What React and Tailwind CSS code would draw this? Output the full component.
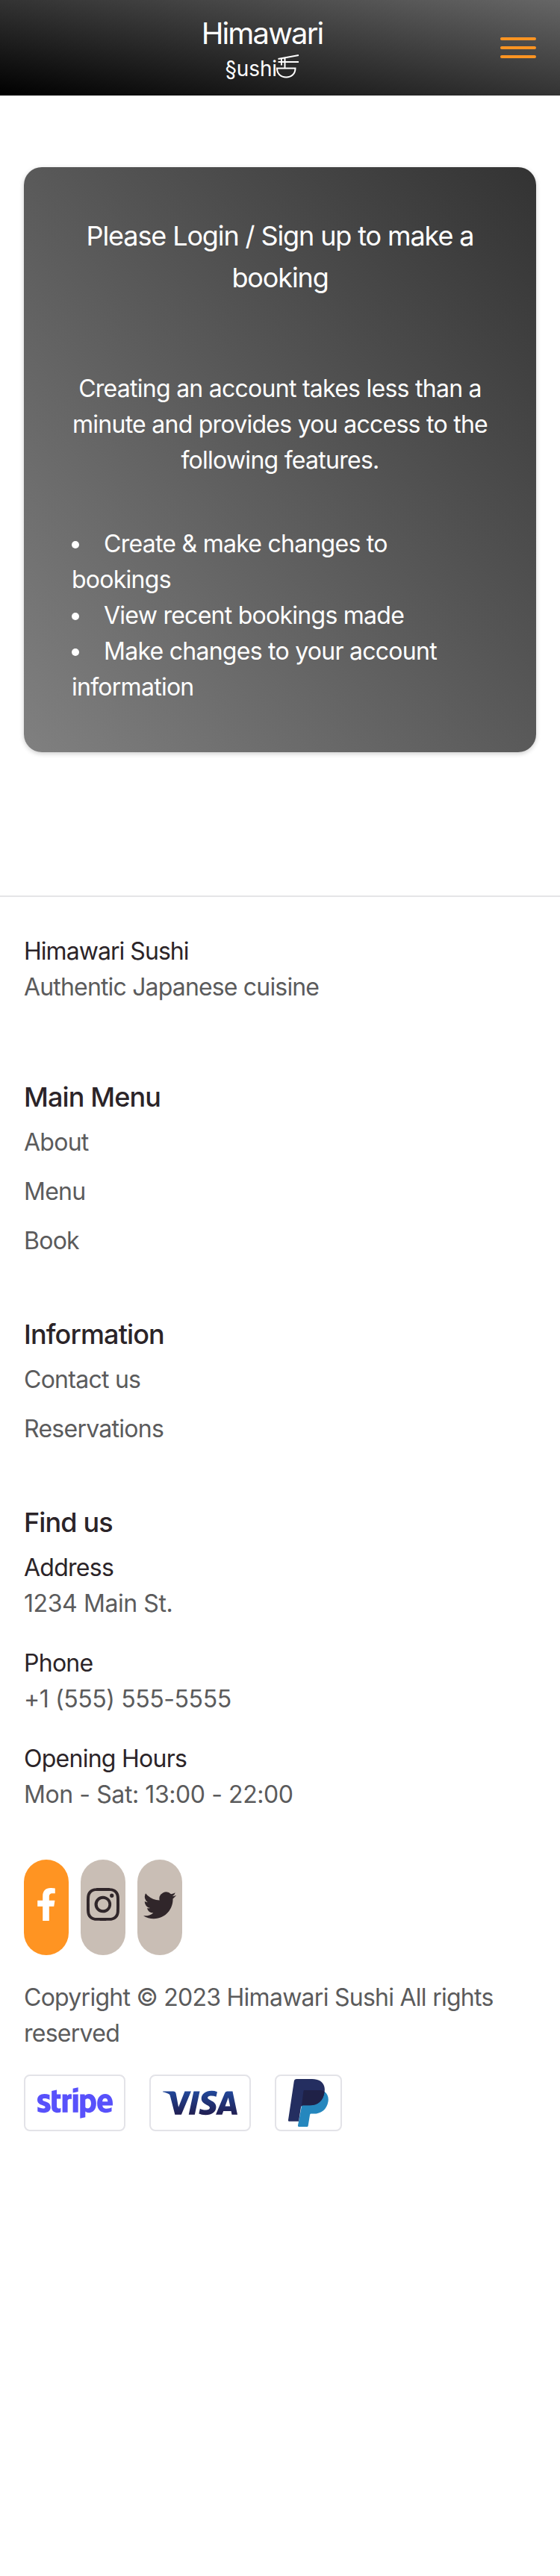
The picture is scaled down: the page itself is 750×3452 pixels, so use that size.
import React from "react";
import { BsInstagram, BsTwitter } from "react-icons/bs";
import { FaFacebookF, FaStripe } from "react-icons/fa";
import { SiVisa } from "react-icons/si";

function BowlIcon() {
  return (
    <svg viewBox="0 0 32 40" className="h-10 w-8 shrink-0" fill="none" stroke="#fff" strokeWidth="2">
      <path d="M2 19.500h24.500c0 7.500-5 12-12.250 12S2 27 2 19.500z" />
      <path d="M3.500 7 31 2M3.500 11h27.500M8 6v9.500M12.500 5.500v14" />
    </svg>
  );
}

function PaypalIcon() {
  return (
    <svg viewBox="0 0 54 64" className="h-16 w-[54px]">
      <path d="M48.500 17c3.800 2.600 6 7 5 13.200C51.700 41 44 46.600 34 46.600h-3.200c-1.200 0-1.600.6-1.800 1.600l-2.300 14.300c-.2 1-.8 1.500-1.800 1.500H14.500c-1.100 0-1.700-.8-1.500-1.900L18 36z" fill="#2587be" />
      <path d="M11.300 0H32c11.500 0 18.300 6.500 16.600 17.600C46.800 29.500 40 35.300 29 35.300h-8.500c-2 0-3.200 1-3.500 2.800l-3 18.700H1.500c-1.100 0-1.700-.8-1.500-1.900L7.800 3C8.100 1 9.300 0 11.300 0z" fill="#242e60" />
      <path d="M21.500 15h22c2 0 3.700.8 5.100 2C47 29.500 40 35.300 29 35.300h-8.500c-1 0-2 .3-2.600 1L20.500 16c.1-.7.400-1 1-1z" fill="#1f2147" />
    </svg>
  );
}

function Section({ title, children }) {
  return (
    <section>
      <h2 className="mb-[9px] text-4xl/14 font-medium tracking-[-0.024em] text-[#2b2428]">{title}</h2>
      {children}
    </section>
  );
}

function Links({ items }) {
  return (
    <ul className="pb-[55px]">
      {items.map((item) => (
        <li key={item} className="mb-[18px]"><a>{item}</a></li>
      ))}
    </ul>
  );
}

function Detail({ label, value }) {
  return (
    <div>
      <p className="text-[#2b2428]">{label}</p>
      <p className="tracking-[-0.013em]">{value}</p>
    </div>
  );
}

const features = ["Create & make changes to bookings", "View recent bookings made", "Make changes to your account information"];

export default function App() {
  return (
    <div className="min-h-[3452px] bg-white font-['Inter',sans-serif] text-[32px]/12 font-normal tracking-[-0.023em]">
      <header className="flex h-32 items-start justify-between bg-[linear-gradient(to_top_right,#000,#666)] pt-[21px] pr-8 pl-[271px] text-white">
        <div className="flex w-40 flex-col items-center">
          <span className="text-[40px]/12 tracking-[-0.046em]">Himawari</span>
          <span className="mt-[3px] flex h-10 items-center text-[28px]/10 tracking-[-0.005em] whitespace-nowrap">
            <span className="w-[67px]">§ushi</span>
            <BowlIcon />
          </span>
        </div>
        <button className="mt-[29px] flex w-12 flex-col gap-2" aria-label="Open menu">
          <span className="h-1 rounded-xs bg-[#ff9422]" />
          <span className="h-1 rounded-xs bg-[#ff9422]" />
          <span className="h-1 rounded-xs bg-[#ff9422]" />
        </button>
      </header>

      <main className="px-8 pt-24">
        <div className="rounded-3xl bg-[linear-gradient(to_top_right,#808080,#333)] px-16 pt-16 pb-[63px] text-white shadow-[0_2px_6px_rgba(0,0,0,0.2)]">
          <h1 className="mb-[97px] text-center text-4xl/14 tracking-[-0.031em]">Please Login / Sign up to make a booking</h1>
          <p className="-mx-2 mb-16 text-center">Creating an account takes less than a<br />minute and provides you access to the<br />following features.</p>
          <ul className="list-inside list-disc">
            {features.map((feature) => <li key={feature}>{feature}</li>)}
          </ul>
        </div>
      </main>

      <footer className="mt-48 border-t-2 border-[#e5e5e7] px-8 pt-[49px] text-[#5b5b5c]">
        <div className="mb-[95px]">
          <p className="tracking-[-0.03em] text-[#2b2428]">Himawari Sushi</p>
          <p className="tracking-[-0.026em]">Authentic Japanese cuisine</p>
        </div>
        <Section title="Main Menu"><Links items={["About", "Menu", "Book"]} /></Section>
        <Section title="Information"><Links items={["Contact us", "Reservations"]} /></Section>
        <Section title="Find us">
          <div className="flex flex-col gap-8">
            <Detail label="Address" value="1234 Main St." />
            <Detail label="Phone" value="+1 (555) 555-5555" />
            <Detail label="Opening Hours" value="Mon - Sat: 13:00 - 22:00" />
          </div>
        </Section>
        <div className="mt-[63px] mb-[33px] flex gap-4 text-[#30262a]">
          <a className="flex h-32 w-15 items-center justify-center rounded-full bg-[#ff9422] pb-2 text-white"><FaFacebookF className="size-11" /></a>
          <a className="flex h-32 w-15 items-center justify-center rounded-full bg-[#c9beb5] pb-2"><BsInstagram className="size-11" /></a>
          <a className="flex h-32 w-15 items-center justify-center rounded-full bg-[#c9beb5] pb-2"><BsTwitter className="size-11" /></a>
        </div>
        <p>Copyright © 2023 Himawari Sushi All rights reserved</p>
        <div className="mt-[31px] flex gap-8">
          <div className="flex h-19 w-34 items-center justify-center rounded-lg border-2 border-[#e3e3e8]">
            <FaStripe className="h-[88px] w-[101px] text-[#5851fb]" />
          </div>
          <div className="flex h-19 w-34 items-center justify-center rounded-lg border-2 border-[#e3e3e8]">
            <svg className="absolute size-0" aria-hidden="true">
              <linearGradient id="visa" x1="0" y1="0" x2="0" y2="1"><stop stopColor="#21489b" /><stop offset="1" stopColor="#211e51" /></linearGradient>
            </svg>
            <SiVisa className="size-25 fill-[url(#visa)]" />
          </div>
          <div className="flex h-19 w-[90px] items-center justify-center rounded-lg border-2 border-[#e3e3e8]"><PaypalIcon /></div>
        </div>
      </footer>
    </div>
  );
}
